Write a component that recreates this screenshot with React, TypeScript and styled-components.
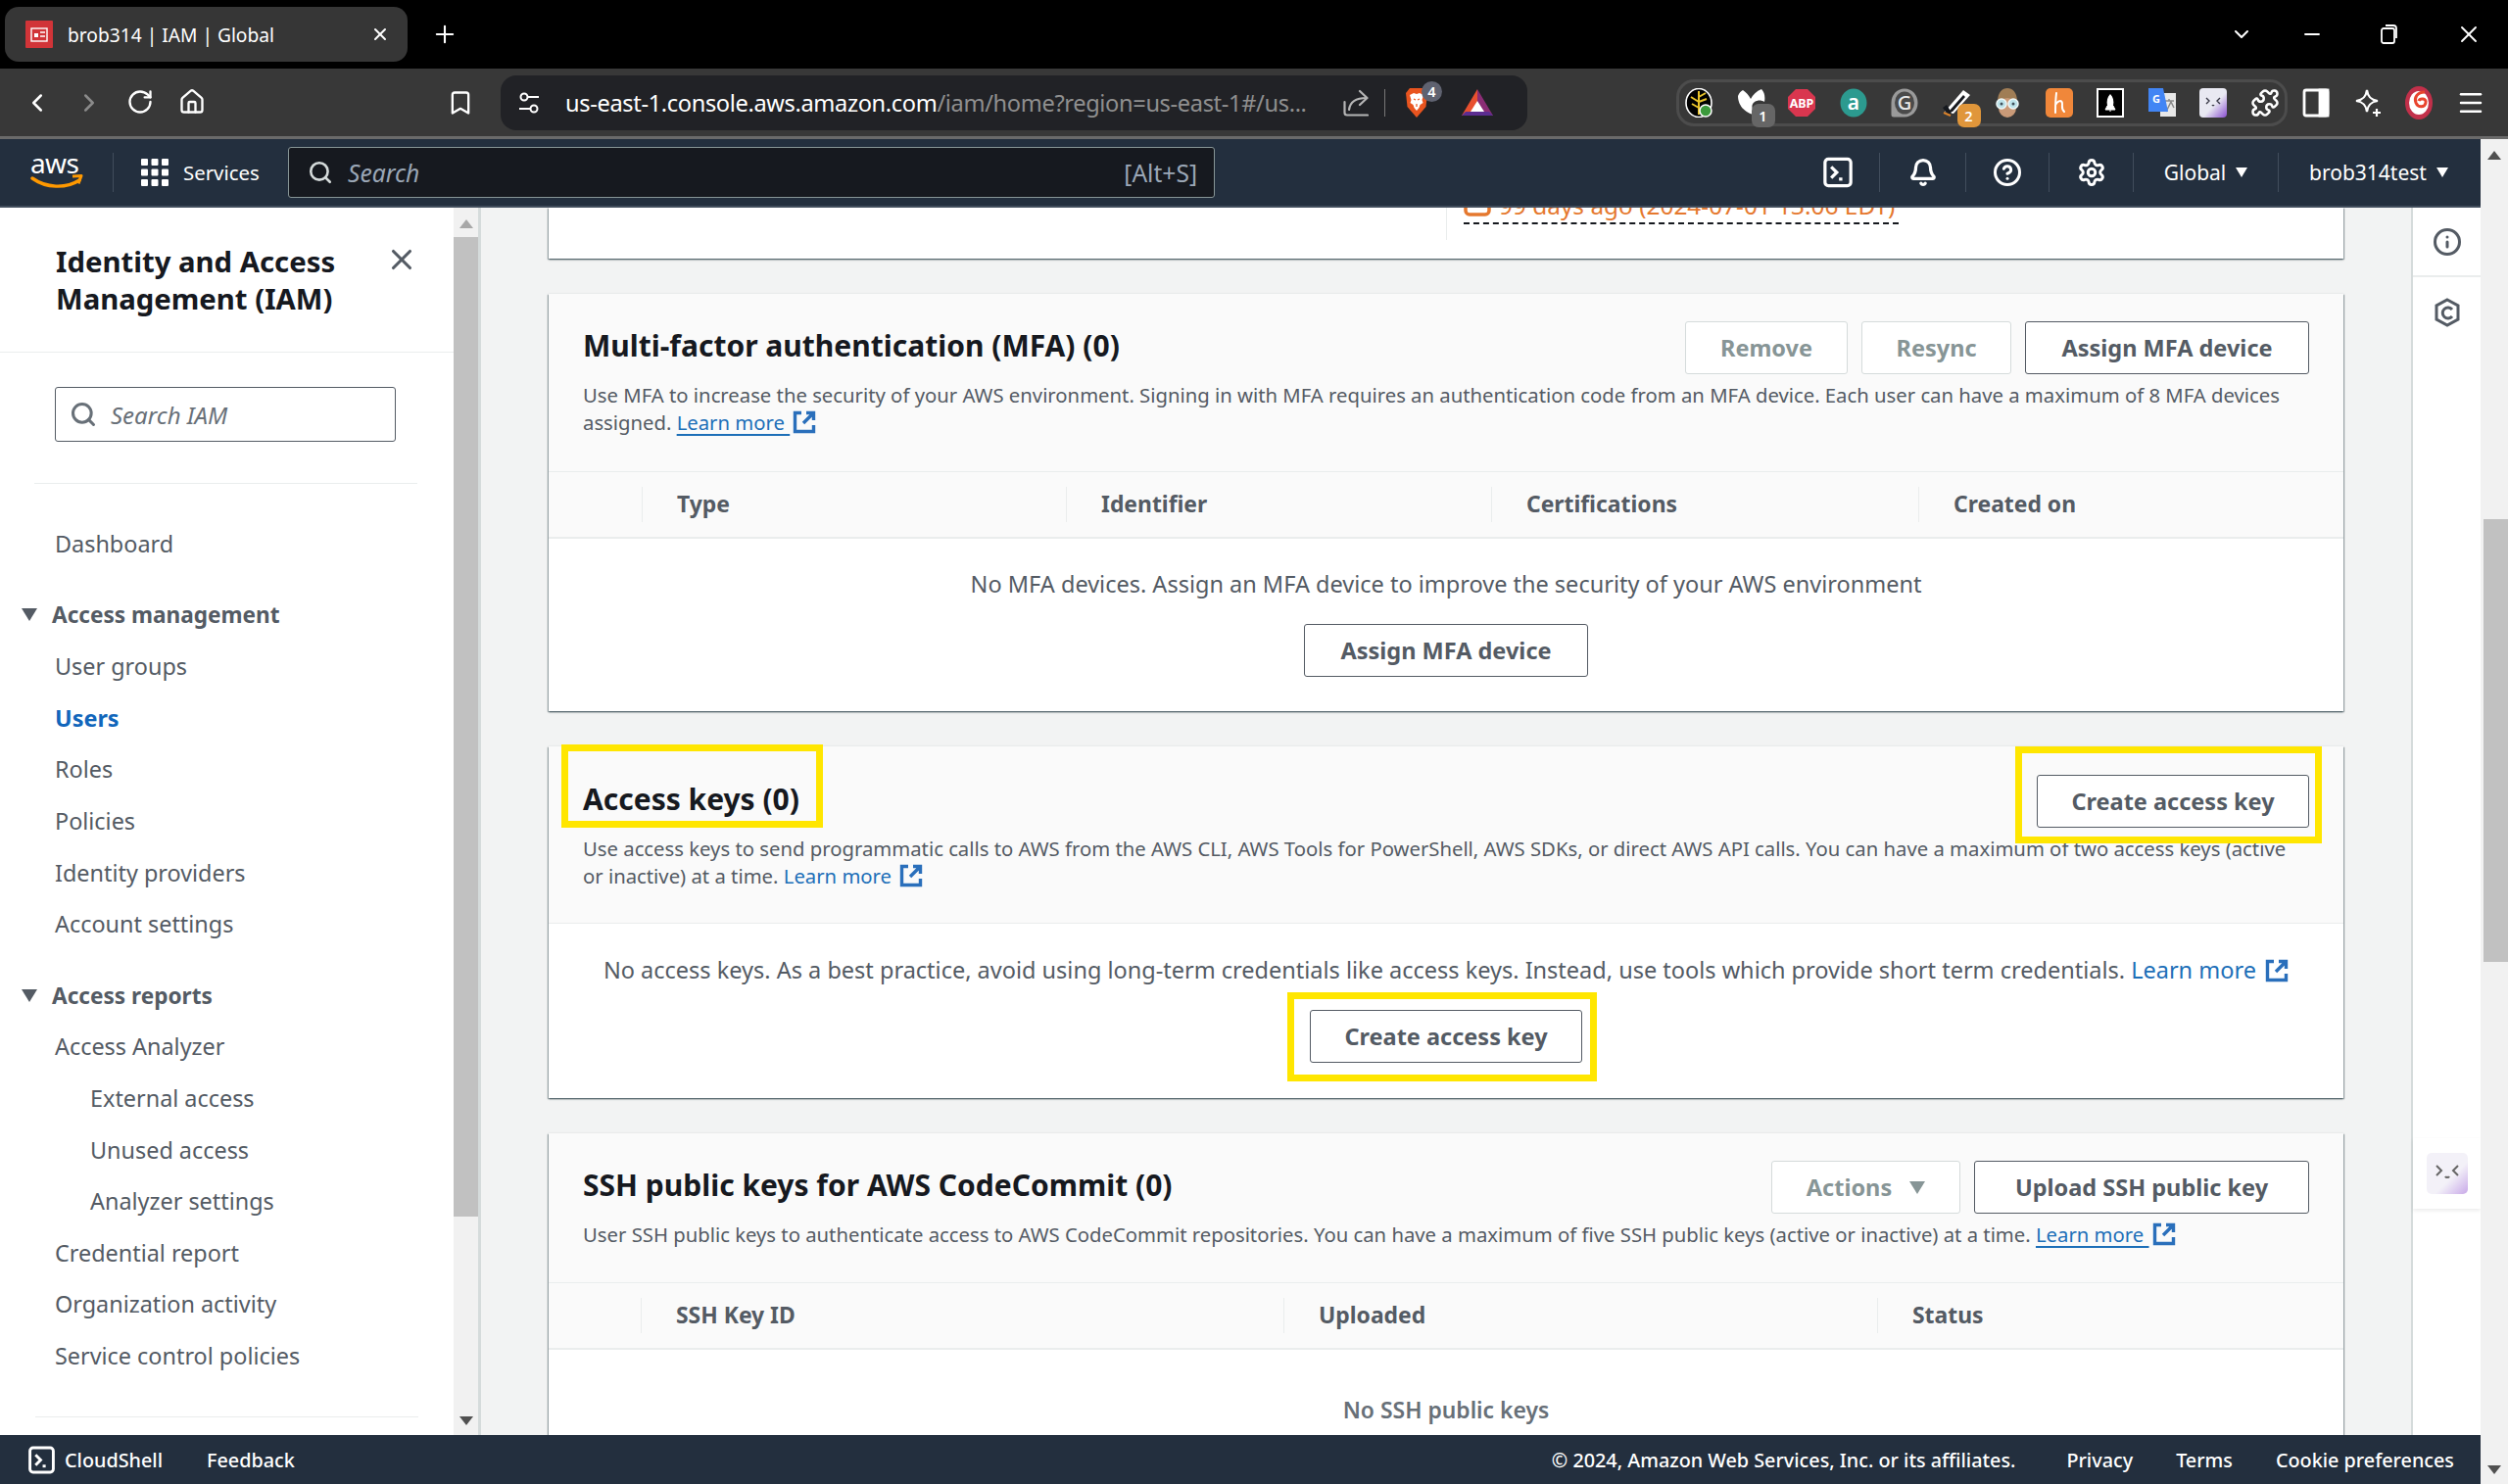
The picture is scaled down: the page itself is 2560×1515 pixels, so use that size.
import React from 'react';
import styled, { createGlobalStyle } from 'styled-components';
import { ChevronLeft, ChevronRight, RotateCw, Home, Bookmark, ChevronDown, Minus, X, Plus, Search, Bell, CircleHelp, Settings, Info, Puzzle, Menu } from 'lucide-react';

const FONT = `"Noto Sans", "Open Sans", sans-serif`;

const GlobalStyle = createGlobalStyle`
    html, body { margin: 0; padding: 0; background: #fff; overflow: hidden; }
    body { font-family: ${FONT}; }
    * { box-sizing: border-box; }
`;

const Page = styled.div`
    width: 2560px;
    height: 1515px;
    display: flex;
    flex-direction: column;
    overflow: hidden;
`;

const TabStrip = styled.div`
    height: 70px;
    background: #000;
    display: flex;
    align-items: center;
    padding-left: 5px;
    color: #fff;
`;

const Tab = styled.div`
    width: 411px;
    height: 56px;
    background: #363636;
    border-radius: 14px;
    display: flex;
    align-items: center;
    padding: 0 18px 0 21px;
    font-size: 19.2px;
    flex-shrink: 0;
`;

const TabTitle = styled.span`
    margin-left: 15px;
    flex: 1;
`;

const NewTab = styled.div`
    margin-left: 24px;
    display: flex;
`;

const WindowButtons = styled.div`
    margin-left: auto;
    display: flex;
    align-items: center;
    padding-right: 26px;
    gap: 56px;
    & > :first-child { margin-right: -8px; }
`;

const Toolbar = styled.div`
    height: 72px;
    background: #383838;
    border-bottom: 3px solid #6a6a6a;
    display: flex;
    align-items: center;
    color: #fff;
`;

const NavButton = styled.div<{ $off?: boolean }>`
    width: 52.6px;
    display: flex;
    justify-content: center;
    color: ${(p) => (p.$off ? '#8a8a8a' : '#fff')};
`;

const NavGroup = styled.div`
    display: flex;
    padding-left: 12px;
    width: 444px;
`;

const BookmarkSlot = styled.div`
    width: 67px;
    display: flex;
    justify-content: center;
    padding-right: 16px;
`;

const AddressBar = styled.div`
    width: 1048px;
    height: 56px;
    background: #212226;
    border-radius: 16px;
    display: flex;
    align-items: center;
    padding-left: 17px;
    font-size: 23.6px;
    letter-spacing: -0.35px;
    flex-shrink: 0;
`;

const Url = styled.div`
    margin-left: 25px;
    width: 782px;
    white-space: nowrap;
    overflow: hidden;
`;

const UrlPath = styled.span`
    color: #8f8f8f;
`;

const AddressTools = styled.div`
    display: flex;
    align-items: center;
    margin-left: 12px;
    color: #b5b5b5;
`;

const ToolDivider = styled.div`
    width: 1px;
    height: 28px;
    background: #777;
    margin: 0 20px 0 16px;
`;

const BadgeHolder = styled.div`
    position: relative;
    display: flex;
    margin-right: 34px;
`;

const Badge = styled.span<{ $bg: string; $top: number; $left: number; $round?: boolean }>`
    position: absolute;
    top: ${(p) => p.$top}px;
    left: ${(p) => p.$left}px;
    width: ${(p) => (p.$round ? 21 : 24)}px;
    height: ${(p) => (p.$round ? 21 : 24)}px;
    background: ${(p) => p.$bg};
    color: #fff;
    font-size: 14.5px;
    font-weight: 600;
    line-height: ${(p) => (p.$round ? 21 : 24)}px;
    text-align: center;
    letter-spacing: 0;
    border-radius: ${(p) => (p.$round ? '50%' : '7px')};
`;

const ExtensionPill = styled.div`
    margin-left: 152px;
    width: 624px;
    height: 48px;
    border: 3px solid #4c4c4c;
    border-radius: 18px;
    display: flex;
    align-items: center;
    flex-shrink: 0;
`;

const ExtSlot = styled.div`
    width: 52.5px;
    display: flex;
    justify-content: center;
    position: relative;
    flex-shrink: 0;
    &:first-child { margin-left: -6px; }
`;

const ToolbarEnd = styled.div`
    display: flex;
    align-items: center;
    margin-left: 3px;
`;

const Workspace = styled.div`
    flex: 1;
    display: flex;
    min-height: 0;
`;

const ConsoleColumn = styled.div`
    width: 2532px;
    display: flex;
    flex-direction: column;
    min-height: 0;
`;

const AwsHeader = styled.header`
    height: 70px;
    background: #232f3e;
    border-bottom: 2px solid #414d5c;
    display: flex;
    align-items: center;
    color: #fff;
    flex-shrink: 0;
`;

const LogoSlot = styled.div`
    width: 116px;
    height: 40px;
    padding-left: 31px;
    border-right: 1px solid #414d5c;
    display: flex;
    align-items: center;
`;

const ServicesButton = styled.div`
    display: flex;
    align-items: center;
    margin-left: 28px;
    gap: 15px;
    font-size: 20.4px;
    width: 150px;
`;

const HeaderSearch = styled.div`
    width: 946px;
    height: 52px;
    background: #16191f;
    border: 1px solid #879596;
    border-radius: 3px;
    display: flex;
    align-items: center;
    padding: 0 17px 0 19px;
    color: #9ba7b6;
    font-size: 24.6px;
`;

const SearchHint = styled.span`
    margin-left: 15px;
    font-style: italic;
    flex: 1;
`;

const HeaderTool = styled.div<{ $w: number; $shift?: number }>`
    width: ${(p) => p.$w}px;
    height: 40px;
    display: flex;
    align-items: center;
    justify-content: center;
    gap: 10px;
    padding-left: ${(p) => p.$shift ?? 0}px;
    font-size: 21px;
    border-right: 1px solid #414d5c;
    &:last-child { border-right: 0; }
`;

const HeaderTools = styled.div`
    margin-left: auto;
    display: flex;
    align-items: center;
    padding-right: 22px;
`;

const Caret = styled.span<{ $color?: string; $size?: number }>`
    width: 0;
    height: 0;
    display: inline-block;
    border-left: ${(p) => (p.$size ?? 13) / 2}px solid transparent;
    border-right: ${(p) => (p.$size ?? 13) / 2}px solid transparent;
    border-top: ${(p) => (p.$size ?? 13) * 0.8}px solid ${(p) => p.$color ?? '#fff'};
`;

const ConsoleBody = styled.div`
    flex: 1;
    display: flex;
    min-height: 0;
    background: #f2f3f3;
`;

const Sidebar = styled.aside`
    width: 463px;
    background: #fff;
    flex-shrink: 0;
    overflow: hidden;
    color: #545b64;
`;

const SideHead = styled.div`
    height: 148px;
    padding: 36px 36px 0 57px;
    border-bottom: 1px solid #eaeded;
    display: flex;
    justify-content: space-between;
    color: #16191f;
`;

const SideTitle = styled.h2`
    margin: 0;
    font-size: 29.3px;
    line-height: 38px;
    font-weight: 700;
`;

const SideSearchWrap = styled.div`
    margin: 0 37px 0 35px;
    padding: 35px 21px 43px 21px;
    height: 134px;
    border-bottom: 1px solid #eaeded;
`;

const SideSearch = styled.div`
    width: 348px;
    height: 56px;
    border: 1px solid #545b64;
    border-radius: 3px;
    display: flex;
    align-items: center;
    padding-left: 14px;
    gap: 14px;
    font-size: 24px;
    font-style: italic;
    color: #687078;
`;

const NavList = styled.nav`
    padding-top: 35px;
`;

const NavItem = styled.div<{ $depth?: number; $active?: boolean }>`
    height: 52.6px;
    line-height: 52.6px;
    padding-left: ${(p) => (p.$depth === 2 ? 92 : 56)}px;
    font-size: 23.4px;
    font-weight: ${(p) => (p.$active ? 700 : 400)};
    color: ${(p) => (p.$active ? '#1166bb' : '#545b64')};
    white-space: nowrap;
`;

const NavSection = styled.div<{ $gapTop: number }>`
    height: 52.6px;
    display: flex;
    align-items: center;
    padding-left: 22px;
    gap: 15px;
    margin-top: ${(p) => p.$gapTop}px;
    font-size: 22.6px;
    font-weight: 700;
`;

const SideDivider = styled.div`
    margin: 35px 36px 0;
    border-top: 1px solid #eaeded;
`;

const Scrollbar = styled.div<{ $w: number }>`
    width: ${(p) => p.$w}px;
    background: #f1f1f1;
    flex-shrink: 0;
    position: relative;
    display: flex;
    flex-direction: column;
    align-items: center;
    padding-top: 12px;
    overflow: hidden;
`;

const ArrowUp = styled.span<{ $color: string }>`
    width: 0;
    height: 0;
    border-left: 7px solid transparent;
    border-right: 7px solid transparent;
    border-bottom: 9px solid ${(p) => p.$color};
    flex-shrink: 0;
`;

const ArrowDown = styled.span`
    width: 0;
    height: 0;
    border-left: 7px solid transparent;
    border-right: 7px solid transparent;
    border-top: 9px solid #505050;
    position: absolute;
    bottom: 10px;
`;

const Thumb = styled.div<{ $top: number; $h: number }>`
    width: 25px;
    align-self: flex-end;
    height: ${(p) => p.$h}px;
    margin-top: ${(p) => p.$top}px;
    background: #c1c1c1;
    flex-shrink: 0;
`;

const MainPane = styled.main`
    flex: 1;
    min-width: 0;
    border-left: 3px solid #d5dbdb;
    padding: 0 69px;
    overflow: hidden;
`;

const RailPane = styled.div`
    width: 71px;
    background: #fff;
    border-left: 2px solid #d5dbdb;
    flex-shrink: 0;
    display: flex;
    flex-direction: column;
    color: #545b64;
`;

const RailButton = styled.div<{ $h: number }>`
    height: ${(p) => p.$h}px;
    display: flex;
    align-items: center;
    justify-content: center;
    border-bottom: 2px solid #eaeded;
`;

const RailPlain = styled.div`
    height: 72px;
    display: flex;
    align-items: center;
    justify-content: center;
`;

const RailWidget = styled.div`
    margin-top: 807px;
    height: 72px;
    display: flex;
    align-items: center;
    justify-content: center;
    box-shadow: 0 2px 4px rgba(0, 0, 0, 0.08);
`;

const Card = styled.section<{ $h?: number; $gap?: number }>`
    background: #fff;
    position: relative;
    margin-top: ${(p) => p.$gap ?? 0}px;
    height: ${(p) => (p.$h ? `${p.$h}px` : 'auto')};
    box-shadow: 0 1px 2px rgba(0, 28, 36, 0.5), 1px 1px 1px rgba(0, 28, 36, 0.25), -1px 1px 1px rgba(0, 28, 36, 0.25);
`;

const StubInner = styled.div`
    height: 33px;
    margin-left: 916px;
    padding-left: 17px;
    border-left: 1px solid #eaeded;
    overflow: hidden;
`;

const StaleDate = styled.div`
    margin-top: -12px;
    width: 444px;
    height: 29px;
    display: flex;
    align-items: flex-start;
    gap: 8px;
    font-size: 24.4px;
    line-height: 20px;
    color: #e5782e;
    border-bottom: 2px dashed #16191f;
    white-space: nowrap;
`;

const CardHead = styled.div<{ $h: number }>`
    height: ${(p) => p.$h}px;
    background: #fafafa;
    border-bottom: 1px solid #eaeded;
    padding: 0 35px;
`;

const TitleRow = styled.div<{ $h: number }>`
    height: ${(p) => p.$h}px;
    display: flex;
    align-items: flex-end;
    justify-content: space-between;
`;

const CardTitle = styled.h3`
    margin: 0 0 7px;
    font-size: 30px;
    line-height: 44px;
    font-weight: 700;
    color: #16191f;
    white-space: nowrap;
`;

const ButtonRow = styled.div`
    display: flex;
    gap: 14px;
`;

const Button = styled.button<{ $off?: boolean; $w: number }>`
    width: ${(p) => p.$w}px;
    height: 54px;
    background: #fff;
    border: 1.5px solid ${(p) => (p.$off ? '#d5dbdb' : '#545b64')};
    border-radius: 3px;
    color: ${(p) => (p.$off ? '#879596' : '#545b64')};
    font-family: ${FONT};
    font-size: 23.5px;
    font-weight: 700;
    display: inline-flex;
    align-items: center;
    justify-content: center;
    gap: 18px;
    padding: 0;
    white-space: nowrap;
    flex-shrink: 0;
`;

const Description = styled.p`
    margin: 7px 0 0;
    font-size: 20.3px;
    line-height: 28.4px;
    color: #545b64;
`;

const LearnMore = styled.a<{ $underline?: boolean }>`
    color: #1d6fb8;
    text-decoration: ${(p) => (p.$underline ? 'underline' : 'none')};
    text-decoration-thickness: 2px;
    text-underline-offset: 4px;
    white-space: nowrap;
`;

const ExternalGlyph = styled.svg`
    margin-left: 3px;
    vertical-align: -4px;
`;

const TableHead = styled.div<{ $cols: string }>`
    height: 68px;
    background: #fafafa;
    border-bottom: 2px solid #eaeded;
    display: grid;
    grid-template-columns: ${(p) => p.$cols};
    align-items: center;
`;

const HeadCell = styled.div`
    height: 36px;
    line-height: 36px;
    border-left: 1px solid #eaeded;
    padding-left: 35px;
    font-size: 22.9px;
    font-weight: 700;
    color: #545b64;
`;

const EmptyBody = styled.div<{ $pad: number; $gap: number; $h: number }>`
    height: ${(p) => p.$h}px;
    padding-top: ${(p) => p.$pad}px;
    display: flex;
    flex-direction: column;
    align-items: center;
    gap: ${(p) => p.$gap}px;
    font-size: 23.5px;
    color: #545b64;
    text-align: center;
`;

const EmptyLine = styled.div`
    line-height: 34px;
    white-space: nowrap;
`;

const EmptyStrong = styled(EmptyLine)`
    font-size: 22.9px;
    font-weight: 600;
    color: #687078;
`;

const Callout = styled.div<{ $x: number; $y: number; $w: number; $h: number }>`
    position: absolute;
    left: ${(p) => p.$x}px;
    top: ${(p) => p.$y}px;
    width: ${(p) => p.$w}px;
    height: ${(p) => p.$h}px;
    border: 7px solid #ffe600;
    pointer-events: none;
`;

const AwsFooter = styled.footer`
    height: 50px;
    background: #232f3e;
    color: #fff;
    display: flex;
    align-items: center;
    padding: 0 27px 0 28px;
    font-size: 19.8px;
    font-weight: 500;
    flex-shrink: 0;
`;

const CloudShellLink = styled.div`
    display: flex;
    align-items: center;
    gap: 9px;
    width: 183px;
`;

const FooterLinks = styled.div`
    margin-left: auto;
    display: flex;
    gap: 44px;
`;

const FooterCopy = styled.span`
    margin-right: 8px;
`;

const External = () => (
    <ExternalGlyph width="24" height="24" viewBox="0 0 24 24" fill="none" stroke="#2a6fbb" strokeWidth="3.4">
        <path d="M9 2.500H2.500v19h19V15" />
        <path d="M14 2.500h7.500V10M21 3 11 13" />
    </ExternalGlyph>
);

const ShellIcon = ({ size }: { size: number }) => (
    <svg width={size} height={size} viewBox="0 0 28 28" fill="none" stroke="#fff" strokeWidth="2.8">
        <rect x="2.500" y="2" width="23" height="24" rx="3" />
        <path d="M8 9l5 5-5 5" />
        <path d="M15 20h3" />
    </svg>
);

function AwsLogo() {
    return (
        <svg width="54" height="60" viewBox="0 0 54 60">
            <text x="0" y="31" fill="#fff" fontFamily={FONT} fontSize="28" letterSpacing="-0.6">aws</text>
            <path d="M2 36c14 10 34 11 48 2" fill="none" stroke="#f90" strokeWidth="3.4" strokeLinecap="round" />
            <path d="M43 34l9-.6-3 8" fill="none" stroke="#f90" strokeWidth="3" strokeLinejoin="round" />
        </svg>
    );
}

function GridIcon() {
    return (
        <svg width="28" height="28" viewBox="0 0 28 28" fill="#fff">
            {[0, 10.5, 21].map((x) => [0, 10.5, 21].map((y) => <rect key={`${x}-${y}`} x={x} y={y} width="7" height="7" rx="1" />))}
        </svg>
    );
}

function IamFavicon() {
    return (
        <svg width="28" height="28" viewBox="0 0 28 28">
            <rect width="28" height="28" fill="#d13438" rx="1" />
            <rect x="6" y="8" width="16" height="13" fill="none" stroke="#fff" strokeWidth="1.4" />
            <rect x="9" y="13" width="4" height="4" fill="#fff" />
            <path d="M15 12h5M15 16h5" stroke="#fff" strokeWidth="1.4" />
        </svg>
    );
}

function SiteSettingsIcon() {
    return (
        <svg width="24" height="24" viewBox="0 0 24 24" fill="none" stroke="#fff" strokeWidth="2">
            <circle cx="7" cy="6" r="3.500" />
            <path d="M11 6h11" />
            <path d="M2 18h11" />
            <circle cx="17" cy="18" r="3.500" />
        </svg>
    );
}

function ShareIcon() {
    return (
        <svg width="26" height="28" viewBox="0 0 26 28" fill="none" stroke="#b5b5b5" strokeWidth="2.2" strokeLinecap="round" strokeLinejoin="round">
            <path d="M1.500 13v11a2.500 2.500 0 0 0 2.500 2.500h21" />
            <path d="M6 21c1-8 7-12 18-12" />
            <path d="M17 2l7.500 7-7.500 7" />
        </svg>
    );
}

function BraveIcon() {
    return (
        <svg width="24" height="31" viewBox="0 0 24 31">
            <path d="M5 1h14l4 5-1.500 14L12 31 2.500 20 1 6z" fill="#e8541f" />
            <path d="M5 8l4-2 3 1 3-1 4 2-1.500 5 1 3-3 2-1 3-2.500 3-2.500-3-1-3-3-2 1-3z" fill="#fff" />
            <path d="M9 12l2 1M15 12l-2 1M12 17v3" stroke="#e8541f" strokeWidth="1.2" />
        </svg>
    );
}

function RewardsIcon() {
    return (
        <svg width="32" height="28" viewBox="0 0 32 28">
            <path d="M16 0L0 27h16z" fill="#e8502f" />
            <path d="M16 0l16 27H16z" fill="#8a2d75" />
            <path d="M0 27l4-4h24l4 4z" fill="#5c2d91" />
            <path d="M16 12l7 11H9z" fill="#fff" />
        </svg>
    );
}

function PanelIcon() {
    return (
        <svg width="28" height="30" viewBox="0 0 28 30" fill="none" stroke="#fff" strokeWidth="2.800">
            <rect x="2" y="2" width="24" height="26" rx="2" />
            <rect x="18" y="2" width="8" height="26" fill="#fff" />
        </svg>
    );
}

const extensions: React.ReactNode[] = [
    <svg key="keeper" width="28" height="30" viewBox="0 0 28 30">
        <ellipse cx="14" cy="15" rx="13" ry="14.500" fill="#000" stroke="#fff" strokeWidth="1.600" />
        <path d="M14 3v24M14 9l7-4M14 14l8-3M14 14l-8-5M14 20l-7-4" stroke="#e8c32a" strokeWidth="2" fill="none" />
        <circle cx="21" cy="23" r="6" fill="#3c9a3c" stroke="#fff" strokeWidth="1.500" />
    </svg>,
    <svg key="malware" width="30" height="30" viewBox="0 0 30 30">
        <path d="M2 8c1-3 3-5 5-6 3 2 6 5 8 9 2-4 6-8 11-10 3 3 4 8 3 13-3-2-7-2-10 0-3 2-3 5-2 8l2 5C10 26 2 18 2 8z" fill="#fff" />
    </svg>,
    <svg key="abp" width="30" height="30" viewBox="0 0 30 30">
        <path d="M9 1h12l8 8v12l-8 8H9l-8-8V9z" fill="#d9364f" />
        <text x="15" y="20" textAnchor="middle" fontFamily={FONT} fontSize="12.5" fontWeight="700" fill="#fff">ABP</text>
    </svg>,
    <svg key="amazon" width="28" height="30" viewBox="0 0 28 30">
        <ellipse cx="14" cy="15" rx="13.500" ry="14.500" fill="#2c9a8f" />
        <text x="14" y="22" textAnchor="middle" fontFamily={FONT} fontSize="21" fontWeight="600" fill="#fff">a</text>
    </svg>,
    <svg key="grammarly" width="28" height="30" viewBox="0 0 28 30">
        <path d="M14 .5C6 .5 .5 7 .5 15v12a2.500 2.500 0 0 0 2.500 2.500h11C22 29.500 27.500 23 27.500 15S22 .5 14 .5z" fill="#9a9a9a" />
        <ellipse cx="14" cy="15" rx="10" ry="11.500" fill="#4a4a4a" />
        <text x="14" y="22" textAnchor="middle" fontFamily={FONT} fontSize="20" fontWeight="500" fill="#e8e8e8">G</text>
    </svg>,
    <svg key="badger" width="30" height="30" viewBox="0 0 30 30">
        <path d="M3 24 22 2l7 5-17 19z" fill="#fff" />
        <path d="M7 24 22 7l2 2-13 15z" fill="#16191f" />
        <path d="M1 20l4-3 5 8-3 3z" fill="#16191f" />
        <path d="M2 25l7 3" stroke="#d9822b" strokeWidth="2" />
    </svg>,
    <svg key="face" width="28" height="32" viewBox="0 0 28 32">
        <path d="M4 15C4 5 9 1 14 1s10 4 10 14z" fill="#a07d55" />
        <ellipse cx="14" cy="21" rx="9" ry="10" fill="#c99a78" />
        <circle cx="8" cy="17" r="5" fill="#bde3ea" stroke="#eef7f8" strokeWidth="1.500" />
        <circle cx="20" cy="17" r="5" fill="#bde3ea" stroke="#eef7f8" strokeWidth="1.500" />
        <circle cx="8" cy="17" r="1.500" fill="#40505a" />
        <circle cx="20" cy="17" r="1.500" fill="#40505a" />
    </svg>,
    <svg key="honey" width="28" height="30" viewBox="0 0 28 30">
        <rect width="28" height="30" rx="5" fill="#f0873a" />
        <path d="M11 5c-1 8-1 14-1 20M10 17c3-5 7-5 7-1 0 3-1 5 2 8" stroke="#fff" strokeWidth="2" fill="none" strokeLinecap="round" />
    </svg>,
    <svg key="rocket" width="28" height="30" viewBox="0 0 28 30">
        <rect x="1" y="1" width="26" height="28" fill="#000" stroke="#fff" strokeWidth="2" />
        <path d="M14 6c3 3 4 7 3 12h-6c-1-5 0-9 3-12z" fill="#fff" />
        <path d="M11 18l-2 4h10l-2-4M14 20v4" fill="#fff" stroke="#fff" />
    </svg>,
    <svg key="translate" width="30" height="30" viewBox="0 0 30 30">
        <path d="M13 5h16v24H13z" fill="#e8e8e8" />
        <path d="M17 13h10M22 11v2M19 24l5-10 3 6" stroke="#8a8a8a" strokeWidth="1.500" fill="none" />
        <path d="M1 0h15l5 24H1z" fill="#4285f4" />
        <text x="9" y="15" textAnchor="middle" fontFamily={FONT} fontSize="11" fontWeight="700" fill="#fff">G</text>
    </svg>,
    <svg key="kaomoji" width="28" height="30" viewBox="0 0 28 30">
        <defs>
            <linearGradient id="kao" x1="0" y1="0" x2="1" y2="1">
                <stop offset="0.55" stopColor="#e9e9f2" />
                <stop offset="1" stopColor="#8a4fd0" />
            </linearGradient>
        </defs>
        <rect width="28" height="30" rx="4" fill="url(#kao)" />
        <path d="M7 10l3 3-3 3M21 10l-3 3 3 3M13 17c.5 1 1.500 1 2 0" stroke="#3a3a48" strokeWidth="1.400" fill="none" />
    </svg>,
];

const navAccess = ['Roles', 'Policies', 'Identity providers', 'Account settings'];
const navSub = ['External access', 'Unused access', 'Analyzer settings'];
const navReports = ['Credential report', 'Organization activity', 'Service control policies'];

function BrowserChrome() {
    return (
        <>
            <TabStrip>
                <Tab>
                    <IamFavicon />
                    <TabTitle>brob314 | IAM | Global</TabTitle>
                    <X size={20} strokeWidth={2.4} />
                </Tab>
                <NewTab><Plus size={28} strokeWidth={1.8} /></NewTab>
                <WindowButtons>
                    <ChevronDown size={24} strokeWidth={2} />
                    <Minus size={24} strokeWidth={1.8} />
                    <svg width="22" height="24" viewBox="0 0 22 24" fill="none" stroke="#fff" strokeWidth="1.800"><rect x="3" y="6" width="13" height="15" rx="2" /><path d="M7 3h8a3 3 0 0 1 3 3v10" /></svg>
                    <X size={28} strokeWidth={1.6} />
                </WindowButtons>
            </TabStrip>
            <Toolbar>
                <NavGroup>
                    <NavButton><ChevronLeft size={30} strokeWidth={2} /></NavButton>
                    <NavButton $off><ChevronRight size={30} strokeWidth={2} /></NavButton>
                    <NavButton><RotateCw size={28} strokeWidth={2} /></NavButton>
                    <NavButton><Home size={28} strokeWidth={2} /></NavButton>
                </NavGroup>
                <BookmarkSlot><Bookmark size={28} strokeWidth={2} /></BookmarkSlot>
                <AddressBar>
                    <SiteSettingsIcon />
                    <Url>us-east-1.console.aws.amazon.com<UrlPath>/iam/home?region=us-east-1#/us...</UrlPath></Url>
                    <AddressTools>
                        <ShareIcon />
                        <ToolDivider />
                        <BadgeHolder>
                            <BraveIcon />
                            <Badge $round $bg="#5f6270" $top={-6} $left={17}>4</Badge>
                        </BadgeHolder>
                        <RewardsIcon />
                    </AddressTools>
                </AddressBar>
                <ExtensionPill>
                    {extensions.map((icon, i) => (
                        <ExtSlot key={i}>
                            {icon}
                            {i === 1 && <Badge $bg="#666" $top={16} $left={27}>1</Badge>}
                            {i === 5 && <Badge $bg="#e0963a" $top={16} $left={27}>2</Badge>}
                        </ExtSlot>
                    ))}
                    <ExtSlot><Puzzle size={30} strokeWidth={2} /></ExtSlot>
                </ExtensionPill>
                <ToolbarEnd>
                    <NavButton><PanelIcon /></NavButton>
                    <NavButton>
                        <svg width="28" height="32" viewBox="0 0 28 32" fill="none" stroke="#fff" strokeWidth="2.200"><path d="M13 3c1 7 4 10 11 11-7 1-10 4-11 11-1-7-4-10-11-11 7-1 10-4 11-11z" /><path d="M23 22v8M19 26h8" /></svg>
                    </NavButton>
                    <NavButton>
                        <svg width="28" height="34" viewBox="0 0 28 34"><ellipse cx="14" cy="17" rx="14" ry="17" fill="#c2304a" /><ellipse cx="14" cy="17" rx="10" ry="12" fill="#fff" /><path d="M20 6c-8 0-11 6-9 11s9 5 10 0-6-5-7-2" fill="none" stroke="#e8442e" strokeWidth="3" /></svg>
                    </NavButton>
                    <NavButton><Menu size={30} strokeWidth={2} /></NavButton>
                </ToolbarEnd>
            </Toolbar>
        </>
    );
}

function ConsoleHeader() {
    return (
        <AwsHeader>
            <LogoSlot><AwsLogo /></LogoSlot>
            <ServicesButton><GridIcon />Services</ServicesButton>
            <HeaderSearch>
                <Search size={26} strokeWidth={2.4} color="#d5dbdb" />
                <SearchHint>Search</SearchHint>
                <span>[Alt+S]</span>
            </HeaderSearch>
            <HeaderTools>
                <HeaderTool $w={86}><ShellIcon size={32} /></HeaderTool>
                <HeaderTool $w={88}><Bell size={30} strokeWidth={2.6} /></HeaderTool>
                <HeaderTool $w={85}><CircleHelp size={30} strokeWidth={2.4} /></HeaderTool>
                <HeaderTool $w={86}><Settings size={30} strokeWidth={2.4} /></HeaderTool>
                <HeaderTool $w={148}>Global <Caret /></HeaderTool>
                <HeaderTool $w={184} $shift={20}>brob314test <Caret /></HeaderTool>
            </HeaderTools>
        </AwsHeader>
    );
}

function SideNav() {
    return (
        <Sidebar>
            <SideHead>
                <SideTitle>Identity and Access<br />Management (IAM)</SideTitle>
                <X size={34} strokeWidth={2.2} color="#545b64" />
            </SideHead>
            <SideSearchWrap>
                <SideSearch>
                    <Search size={28} strokeWidth={2.6} color="#687078" />
                    Search IAM
                </SideSearch>
            </SideSearchWrap>
            <NavList>
                <NavItem>Dashboard</NavItem>
                <NavSection $gapTop={20}><Caret $color="#545b64" $size={17} />Access management</NavSection>
                <NavItem>User groups</NavItem>
                <NavItem $active>Users</NavItem>
                {navAccess.map((n) => <NavItem key={n}>{n}</NavItem>)}
                <NavSection $gapTop={20}><Caret $color="#545b64" $size={17} />Access reports</NavSection>
                <NavItem>Access Analyzer</NavItem>
                {navSub.map((n) => <NavItem key={n} $depth={2}>{n}</NavItem>)}
                {navReports.map((n) => <NavItem key={n}>{n}</NavItem>)}
            </NavList>
            <SideDivider />
        </Sidebar>
    );
}

function MfaCard() {
    return (
        <Card $gap={36}>
            <CardHead $h={182}>
                <TitleRow $h={82}>
                    <CardTitle>Multi-factor authentication (MFA) (0)</CardTitle>
                    <ButtonRow>
                        <Button $off $w={166}>Remove</Button>
                        <Button $off $w={153}>Resync</Button>
                        <Button $w={290}>Assign MFA device</Button>
                    </ButtonRow>
                </TitleRow>
                <Description>
                    Use MFA to increase the security of your AWS environment. Signing in with MFA requires an authentication code from an MFA device. Each user can have a maximum of 8 MFA devices assigned. <LearnMore $underline>Learn more </LearnMore><External />
                </Description>
            </CardHead>
            <TableHead $cols="95px 433px 434px 436px 434px">
                <div />
                <HeadCell>Type</HeadCell>
                <HeadCell>Identifier</HeadCell>
                <HeadCell>Certifications</HeadCell>
                <HeadCell>Created on</HeadCell>
            </TableHead>
            <EmptyBody $pad={29} $gap={24} $h={176}>
                <EmptyLine>No MFA devices. Assign an MFA device to improve the security of your AWS environment</EmptyLine>
                <Button $w={290}>Assign MFA device</Button>
            </EmptyBody>
        </Card>
    );
}

function AccessKeysCard() {
    return (
        <Card $gap={36}>
            <CardHead $h={181}>
                <TitleRow $h={83}>
                    <CardTitle>Access keys (0)</CardTitle>
                    <Button $w={278}>Create access key</Button>
                </TitleRow>
                <Description>
                    Use access keys to send programmatic calls to AWS from the AWS CLI, AWS Tools for PowerShell, AWS SDKs, or direct AWS API calls. You can have a maximum of two access keys (active<br />or inactive) at a time. <LearnMore>Learn more</LearnMore> <External />
                </Description>
            </CardHead>
            <EmptyBody $pad={30} $gap={24} $h={178}>
                <EmptyLine>No access keys. As a best practice, avoid using long-term credentials like access keys. Instead, use tools which provide short term credentials. <LearnMore>Learn more</LearnMore> <External /></EmptyLine>
                <Button $w={278}>Create access key</Button>
            </EmptyBody>
            <Callout $x={13} $y={-2} $w={267} $h={85} />
            <Callout $x={1497} $y={0} $w={313} $h={99} />
            <Callout $x={754} $y={251} $w={316} $h={91} />
        </Card>
    );
}

function SshKeysCard() {
    return (
        <Card $gap={36}>
            <CardHead $h={153}>
                <TitleRow $h={82}>
                    <CardTitle>SSH public keys for AWS CodeCommit (0)</CardTitle>
                    <ButtonRow>
                        <Button $off $w={193}>Actions <Caret $color="#879596" $size={17} /></Button>
                        <Button $w={342}>Upload SSH public key</Button>
                    </ButtonRow>
                </TitleRow>
                <Description>
                    User SSH public keys to authenticate access to AWS CodeCommit repositories. You can have a maximum of five SSH public keys (active or inactive) at a time. <LearnMore $underline>Learn more </LearnMore><External />
                </Description>
            </CardHead>
            <TableHead $cols="94px 656px 606px 476px">
                <div />
                <HeadCell>SSH Key ID</HeadCell>
                <HeadCell>Uploaded</HeadCell>
                <HeadCell>Status</HeadCell>
            </TableHead>
            <EmptyBody $pad={45} $gap={0} $h={120}>
                <EmptyStrong>No SSH public keys</EmptyStrong>
            </EmptyBody>
        </Card>
    );
}

function App() {
    return (
        <Page>
            <GlobalStyle />
            <BrowserChrome />
            <Workspace>
                <ConsoleColumn>
                    <ConsoleHeader />
                    <ConsoleBody>
                        <SideNav />
                        <Scrollbar $w={25}>
                            <ArrowUp $color="#a8a8a8" />
                            <Thumb $top={9} $h={1000} />
                            <ArrowDown />
                        </Scrollbar>
                        <MainPane>
                            <Card $h={52}>
                                <StubInner>
                                    <StaleDate>
                                        <svg width="28" height="21" viewBox="0 0 28 21" fill="none" stroke="#e5782e" strokeWidth="3.500">
                                            <rect x="2" y="-9" width="24" height="28" rx="4" />
                                            <path d="M14 5v7" />
                                        </svg>
                                        99 days ago (2024-07-01 13:06 EDT)
                                    </StaleDate>
                                </StubInner>
                            </Card>
                            <MfaCard />
                            <AccessKeysCard />
                            <SshKeysCard />
                        </MainPane>
                        <RailPane>
                            <RailButton $h={71}><Info size={30} strokeWidth={2.4} /></RailButton>
                            <RailPlain>
                                <svg width="28" height="30" viewBox="0 0 28 30" fill="none" stroke="#545b64" strokeWidth="3"><path d="M14 2l11 6v14l-11 6-11-6V8z" /><path d="M19 12a5.500 5.500 0 1 0 0 7" /></svg>
                            </RailPlain>
                            <RailWidget>
                                <svg width="42" height="42" viewBox="0 0 42 42">
                                    <defs>
                                        <linearGradient id="kaoRail" x1="0" y1="0" x2="1" y2="1">
                                            <stop offset="0.6" stopColor="#f3f1f8" />
                                            <stop offset="1" stopColor="#c8a8e8" />
                                        </linearGradient>
                                    </defs>
                                    <rect width="42" height="42" rx="5" fill="url(#kaoRail)" />
                                    <path d="M10 13l5 5-5 5M32 13l-5 5 5 5M19 24c.6 1.400 3.400 1.400 4 0" stroke="#666" strokeWidth="2" fill="none" />
                                </svg>
                            </RailWidget>
                        </RailPane>
                    </ConsoleBody>
                    <AwsFooter>
                        <CloudShellLink><ShellIcon size={29} />CloudShell</CloudShellLink>
                        <span>Feedback</span>
                        <FooterLinks>
                            <FooterCopy>© 2024, Amazon Web Services, Inc. or its affiliates.</FooterCopy>
                            <span>Privacy</span>
                            <span>Terms</span>
                            <span>Cookie preferences</span>
                        </FooterLinks>
                    </AwsFooter>
                </ConsoleColumn>
                <Scrollbar $w={28}>
                    <ArrowUp $color="#505050" />
                    <Thumb $top={367} $h={452} />
                    <ArrowDown />
                </Scrollbar>
            </Workspace>
        </Page>
    );
}

export default App
